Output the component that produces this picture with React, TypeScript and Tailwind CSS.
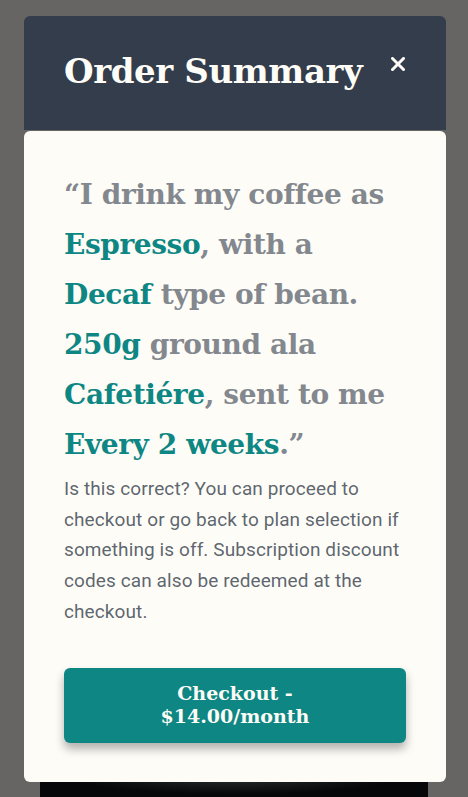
import React from "react";

const serif = "font-['DejaVu_Serif',serif]";

const Hl = ({ children }: { children: React.ReactNode }) => (
  <span className="text-[#0E8784]">{children}</span>
);

const App = () => {
  return (
    <div className="relative h-[797px] w-full overflow-hidden bg-[#666563]">
      <div className="absolute bottom-0 left-[40px] right-[40px] h-[40px] bg-[radial-gradient(ellipse_at_center,#2a2d30_0%,#050708_60%)]" />
      <div className="relative ml-[24px] mr-[22px] mt-[16px] flex flex-col">
        <div className="flex h-[114px] items-start justify-between rounded-t-md bg-[#333D4B] pl-[40px] pr-[41px] pt-[31px]">
          <h2 className={`${serif} text-[34px] font-bold leading-[48px] tracking-[-0.4px] text-[#FEFCF7]`}>
            Order Summary
          </h2>
          <button className="mt-[10px] flex h-[14px] w-[14px] items-center justify-center text-[#FEFCF7]">
            <svg width="14" height="14" viewBox="0 0 14 14">
              <path d="M1.5 1.5L12.5 12.5M12.5 1.5L1.5 12.5" stroke="currentColor" strokeWidth="3" strokeLinecap="square" />
            </svg>
          </button>
        </div>
        <div className="mt-px rounded-md bg-[#FEFCF7] px-[40px] pb-[39px] pt-[39px]">
          <p className={`${serif} text-[28px] font-bold leading-[50px] tracking-[-0.4px] text-[#83888F]`}>
            “I drink my coffee as
            <br />
            <Hl>Espresso</Hl>, with a
            <br />
            <Hl>Decaf</Hl> type of bean.
            <br />
            <Hl>250g</Hl> ground ala
            <br />
            <Hl>Cafetiére</Hl>, sent to me
            <br />
            <Hl>Every 2 weeks</Hl>.”
          </p>
          <p className="mt-[4px] font-['Roboto',sans-serif] text-[19px] leading-[30.7px] tracking-[0.1px] text-[#333D4B]/80">
            Is this correct? You can proceed to
            <br />
            checkout or go back to plan selection if
            <br />
            something is off. Subscription discount
            <br />
            codes can also be redeemed at the
            <br />
            checkout.
          </p>
          <button
            className={`${serif} mt-[40px] flex h-[75px] w-full flex-col items-center justify-center rounded-md bg-[#0E8784] text-center text-[19px] font-bold leading-[23px] text-[#FEFCF7] shadow-[0_6px_10px_rgba(0,0,0,0.3)]`}
          >
            <span>Checkout -</span>
            <span>$14.00/month</span>
          </button>
        </div>
      </div>
    </div>
  );
};

export default App;
